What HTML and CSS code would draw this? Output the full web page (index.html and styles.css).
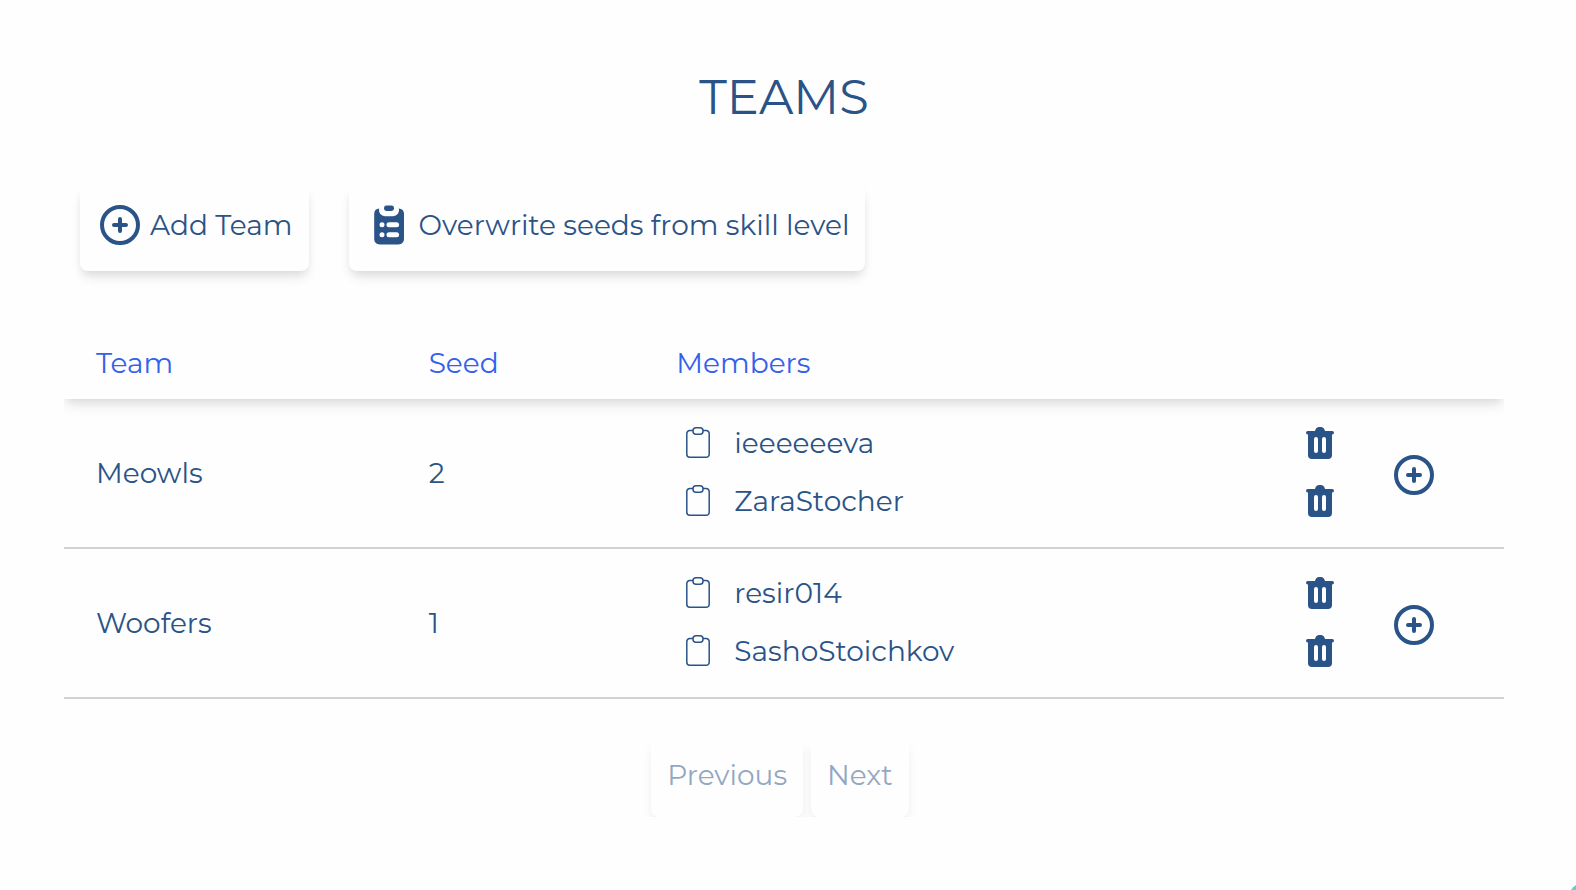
FILE: index.html
```html
<!DOCTYPE html>
<html lang="en">
<head>
<meta charset="utf-8">
<meta name="viewport" content="width=device-width, initial-scale=1">
<title>Teams</title>
<link rel="stylesheet" href="styles.css">
</head>
<body>
<svg class="sprite" aria-hidden="true">
  <symbol id="plus-circle" viewBox="0 0 24 24">
    <path d="M12 9v6M9 12h6M21 12a9 9 0 1 1-18 0 9 9 0 0 1 18 0Z" fill="none" stroke="currentColor" stroke-width="2" stroke-linecap="round" stroke-linejoin="round"/>
  </symbol>
  <symbol id="clipboard-list" viewBox="0 0 24 24">
    <rect x="9.5" y="2.3" width="5" height="2.7" rx="1.2" fill="currentColor"/>
    <path fill="currentColor" fill-rule="evenodd" d="M7.1 3.7A3 3 0 0 0 10 7.6h4a3 3 0 0 0 2.9-3.9c1.6.1 2.6 1 2.6 2.8v12.3c0 1.9-1 2.9-2.9 2.9H7.5c-1.9 0-2.900-1-2.900-2.900V6.500c0-1.800.9-2.700 2.500-2.800ZM8.500 10.600a1.250 1.250 0 1 0 0 2.500 1.250 1.250 0 0 0 0-2.500Zm0 5a1.250 1.250 0 1 0 0 2.500 1.250 1.250 0 0 0 0-2.500Zm3.500-5a1.250 1.250 0 1 0 0 2.500h3.800a1.250 1.250 0 1 0 0-2.500Zm0 5a1.250 1.250 0 1 0 0 2.500h3.800a1.250 1.250 0 1 0 0-2.500Z"/>
  </symbol>
  <symbol id="clipboard" viewBox="0 1 32 32">
    <path d="M11 4.500H7.800a3 3 0 0 0-3 3v20.800a3 3 0 0 0 3 3h16.400a3 3 0 0 0 3-3V7.500a3 3 0 0 0-3-3H21" fill="none" stroke="currentColor" stroke-width="1.500"/>
    <rect x="11" y="1.750" width="10" height="6.600" rx="3" fill="none" stroke="currentColor" stroke-width="1.500"/>
  </symbol>
  <symbol id="trash" viewBox="0 0 32 32">
    <path fill="currentColor" fill-rule="evenodd" d="M11 4c.6-2.400 2.200-4 4-4h2c1.800 0 3.400 1.600 4 4h7.200a1.800 1.800 0 0 1 0 3.600H28V28c0 2.600-1.400 4-4 4H8c-2.600 0-4-1.400-4-4V7.600h-.2a1.800 1.800 0 0 1 0-3.600ZM12 10a2 2 0 0 0-2 2v12a2 2 0 0 0 4 0V12a2 2 0 0 0-2-2Zm8 0a2 2 0 0 0-2 2v12a2 2 0 0 0 4 0V12a2 2 0 0 0-2-2Z"/>
  </symbol>
</svg>

<main class="page">
  <h1 class="title">TEAMS</h1>

  <div class="toolbar">
    <button class="btn" type="button"><svg class="icon-lg" aria-hidden="true"><use href="#plus-circle"/></svg>Add Team</button>
    <button class="btn" type="button"><svg class="icon-lg" aria-hidden="true"><use href="#clipboard-list"/></svg>Overwrite seeds from skill level</button>
  </div>

  <div class="table-wrap">
    <table class="teams">
      <colgroup><col class="col-team"><col class="col-seed"><col><col class="col-add"></colgroup>
      <thead>
        <tr><th scope="col">Team</th><th scope="col">Seed</th><th scope="col">Members</th><th></th></tr>
      </thead>
      <tbody>
        <tr>
          <td>Meowls</td>
          <td>2</td>
          <td class="roster">
            <ul class="members">
              <li class="member"><button class="icon-btn copy" type="button" aria-label="Copy ieeeeeeva"><svg class="icon" aria-hidden="true"><use href="#clipboard"/></svg></button><span class="name">ieeeeeeva</span><button class="icon-btn" type="button" aria-label="Remove ieeeeeeva"><svg class="icon" aria-hidden="true"><use href="#trash"/></svg></button></li>
              <li class="member"><button class="icon-btn copy" type="button" aria-label="Copy ZaraStocher"><svg class="icon" aria-hidden="true"><use href="#clipboard"/></svg></button><span class="name">ZaraStocher</span><button class="icon-btn" type="button" aria-label="Remove ZaraStocher"><svg class="icon" aria-hidden="true"><use href="#trash"/></svg></button></li>
            </ul>
          </td>
          <td class="add"><button class="icon-btn" type="button" aria-label="Add member to Meowls"><svg class="icon-lg" aria-hidden="true"><use href="#plus-circle"/></svg></button></td>
        </tr>
        <tr>
          <td>Woofers</td>
          <td>1</td>
          <td class="roster">
            <ul class="members">
              <li class="member"><button class="icon-btn copy" type="button" aria-label="Copy resir014"><svg class="icon" aria-hidden="true"><use href="#clipboard"/></svg></button><span class="name">resir014</span><button class="icon-btn" type="button" aria-label="Remove resir014"><svg class="icon" aria-hidden="true"><use href="#trash"/></svg></button></li>
              <li class="member"><button class="icon-btn copy" type="button" aria-label="Copy SashoStoichkov"><svg class="icon" aria-hidden="true"><use href="#clipboard"/></svg></button><span class="name">SashoStoichkov</span><button class="icon-btn" type="button" aria-label="Remove SashoStoichkov"><svg class="icon" aria-hidden="true"><use href="#trash"/></svg></button></li>
            </ul>
          </td>
          <td class="add"><button class="icon-btn" type="button" aria-label="Add member to Woofers"><svg class="icon-lg" aria-hidden="true"><use href="#plus-circle"/></svg></button></td>
        </tr>
      </tbody>
    </table>
    <nav class="pager" aria-label="Pagination">
      <button class="btn btn-page" type="button" disabled>Previous</button>
      <button class="btn btn-page" type="button" disabled>Next</button>
    </nav>
  </div>
</main>
<div class="bubble"></div>
</body>
</html>
```
FILE: styles.css
```css
* {
  box-sizing: border-box;
}

body {
  margin: 0;
  background: #fefefe;
  color: #2a5387;
  font-family: Montserrat, Inter, sans-serif;
  font-size: 28px;
  line-height: 42px;
  overflow: hidden;
}

.sprite {
  display: none;
}

.page {
  padding: 61px 72px 0 64px;
}

.title {
  margin: 0;
  font-size: 48px;
  font-weight: 400;
  line-height: 72px;
  text-align: center;
}

.toolbar {
  display: flex;
  flex-wrap: wrap;
  gap: 40px;
  padding: 52px 16px 54px;
}

.btn {
  display: flex;
  align-items: center;
  gap: 6px;
  padding: 16px 16px 22px;
  border: 0;
  border-radius: 8px;
  background: #fefefe;
  color: inherit;
  font: inherit;
  box-shadow: 0 8px 12px -2px rgba(0, 0, 0, 0.1), 0 4px 8px -2px rgba(0, 0, 0, 0.06);
}

.icon-lg {
  display: block;
  width: 48px;
  height: 48px;
}

.icon {
  display: block;
  width: 32px;
  height: 32px;
}

.icon-btn {
  display: inline-block;
  padding: 0;
  border: 0;
  background: none;
  color: inherit;
  vertical-align: middle;
}

.table-wrap {
  overflow: hidden;
}

.teams {
  width: 100%;
  table-layout: fixed;
  border-collapse: collapse;
}

.teams thead {
  box-shadow: 0 8px 12px -2px rgba(0, 0, 0, 0.1), 0 4px 8px -2px rgba(0, 0, 0, 0.06);
}

.teams th {
  padding: 17px 0 15px 32px;
  color: #3461eb;
  font-weight: 400;
  text-align: left;
}

.teams td {
  padding: 16px 0 16px 32px;
  vertical-align: middle;
}

.teams tbody tr {
  border-bottom: 2px solid #d2d2d2;
}

.teams .roster {
  padding: 15px 0 17px 32px;
}

.col-team {
  width: 23.1%;
}

.col-seed {
  width: 17.2%;
}

.col-add {
  width: 168px;
}

.teams .add {
  padding: 20px 12px 16px 0;
  text-align: center;
}

.members {
  margin: 0;
  padding: 0;
  list-style: none;
}

.member {
  display: flex;
  align-items: center;
  height: 58px;
}

.copy {
  padding: 0 20px 0 6px;
}

.name {
  flex: 1;
}

.pager {
  display: flex;
  justify-content: center;
  gap: 8px;
  padding: 39px 8px 0 0;
}

.btn-page {
  padding: 16px 16px 21px;
  opacity: 0.5;
}

.bubble {
  position: fixed;
  right: -45px;
  bottom: -45px;
  width: 56px;
  height: 56px;
  border-radius: 50%;
  background: #5fcfc8;
}
```
